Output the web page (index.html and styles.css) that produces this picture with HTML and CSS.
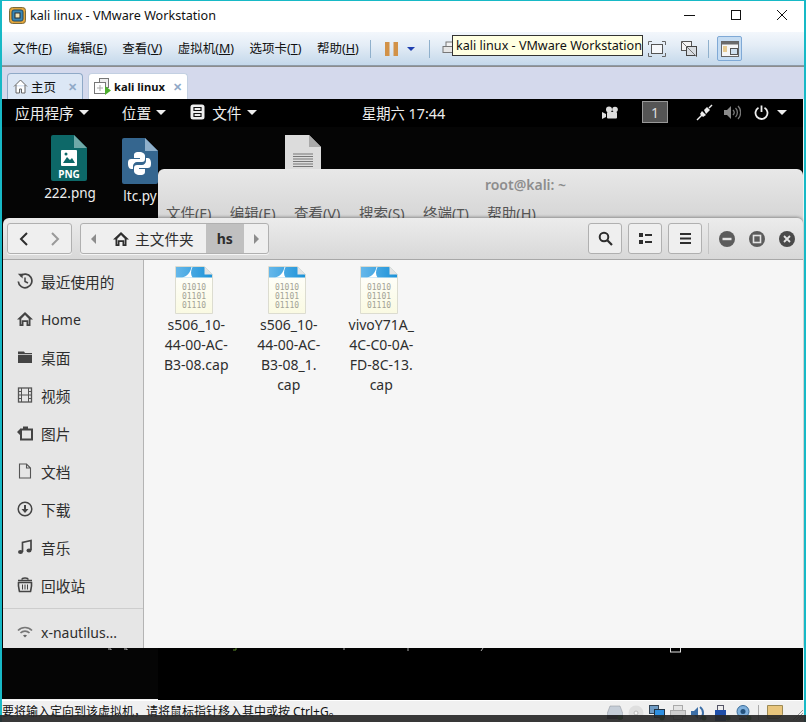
FILE: index.html
```html
<!DOCTYPE html>
<html lang="zh">
<head>
<meta charset="utf-8">
<title>kali linux - VMware Workstation</title>
<link rel="stylesheet" href="styles.css">
</head>
<body>
<div class="window">
  <div class="frame">
    <header class="titlebar">
      <svg class="app-logo" width="17" height="17" viewBox="0 0 17 17"><rect x="0.5" y="0.5" width="16" height="16" rx="3" fill="#e2a43a" stroke="#7d6a3a"/><rect x="3" y="3" width="11" height="11" rx="2" fill="#3a86b4" stroke="#1d4a68"/><rect x="6" y="6" width="5" height="5" fill="#f2e5b8" stroke="#2b2b2b"/></svg>
      <span class="title-text">kali linux - VMware Workstation</span>
      <div class="winctl">
        <svg width="12" height="12" viewBox="0 0 12 12"><path d="M0 6.5h11" stroke="#111" fill="none"/></svg>
        <svg width="12" height="12" viewBox="0 0 12 12"><rect x="1.5" y="1.5" width="9" height="9" stroke="#111" fill="none"/></svg>
        <svg width="12" height="12" viewBox="0 0 12 12"><path d="M1 1l10 10M11 1L1 11" stroke="#111" fill="none"/></svg>
      </div>
    </header>

    <nav class="toolbar">
      <div class="menus">
        <span>文件(<u>F</u>)</span><span>编辑(<u>E</u>)</span><span>查看(<u>V</u>)</span><span>虚拟机(<u>M</u>)</span><span>选项卡(<u>T</u>)</span><span>帮助(<u>H</u>)</span>
      </div>
      <i class="tb-sep tb-sep-a"></i>
      <svg class="tb-pause" width="13" height="14" viewBox="0 0 13 14"><rect width="4.5" height="14" fill="#d29248"/><rect x="8.5" width="4.5" height="14" fill="#d29248"/></svg>
      <svg class="tb-drop" width="8" height="4" viewBox="0 0 8 4"><path d="M0 0h8L4 4z" fill="#1f3fb0"/></svg>
      <i class="tb-sep tb-sep-b"></i>
      <svg class="tb-send" width="12" height="16" viewBox="0 0 12 16"><rect x="4" y="1" width="7" height="6" fill="#f2f2f2" stroke="#777"/><rect x="1" y="5.5" width="10" height="6" fill="#e6e6e6" stroke="#777"/></svg>
      <div class="tb-end">
        <svg width="18" height="16" viewBox="0 0 18 16"><rect x="3.5" y="3.5" width="11" height="9" fill="#f6f8fb" stroke="#555"/><path d="M0.5 4V0.5H4M14 .5h3.5V4M.5 12v3.5H4M14 15.500h3.500V12" fill="none" stroke="#666"/></svg>
        <svg width="18" height="18" viewBox="0 0 18 18"><rect x="1.500" y="1.500" width="10" height="9" fill="#f4f4f4" stroke="#555"/><rect x="6.500" y="6.500" width="10" height="9" fill="#d8dde2" stroke="#444"/><path d="M1 1l16 16" stroke="#777"/></svg>
        <i class="tb-sep tb-sep-c"></i>
        <span class="tb-active">
          <svg width="18" height="16" viewBox="0 0 18 16"><rect x="0.500" y="0.500" width="17" height="15" fill="#f6f6f6" stroke="#666"/><rect x="1" y="1" width="16" height="2.500" fill="#6b6b6b"/><path d="M2 6h4M2 8h4M2 10h4" stroke="#d9a02f"/><rect x="9.500" y="7.500" width="7" height="6" fill="#cfe0ef" stroke="#555"/></svg>
        </span>
      </div>
      <div class="tooltip">kali linux - VMware Workstation</div>
    </nav>

    <div class="tabbar">
      <div class="tab tab-home">
        <svg width="15" height="15" viewBox="0 0 15 15"><path d="M1 7.500L7.500 1 14 7.500M3 6v8h3.500v-4h2v4H12V6" fill="#fff" stroke="#666" stroke-width="1"/></svg>
        <span>主页</span><b class="tab-x">✕</b>
      </div>
      <div class="tab tab-vm">
        <svg width="17" height="17" viewBox="0 0 17 17"><rect x="5.500" y="0.500" width="9" height="9" fill="#eee" stroke="#777"/><rect x="0.500" y="4.500" width="11" height="11" fill="#fff" stroke="#777"/><path d="M6 7v6M3 10h6" stroke="#aaa"/><path d="M11 8l6 4.500-6 4.500z" fill="#4cae2c"/></svg>
        <strong>kali linux</strong><b class="tab-x">✕</b>
      </div>
    </div>

    <main class="vm">
      <div class="gnome-bar">
        <span class="gb-item gb-apps">应用程序<i class="caret"></i></span>
        <span class="gb-item gb-places">位置<i class="caret"></i></span>
        <span class="gb-item gb-files">
          <svg width="15" height="16" viewBox="0 0 15 16"><rect x="0.500" y="0.500" width="14" height="15" rx="2.500" fill="#eee"/><path d="M4 3.500h7v3H4zM4 9.500h7v3H4z" fill="none" stroke="#111" stroke-width="1.200"/></svg>
          文件<i class="caret"></i>
        </span>
        <span class="gb-clock">星期六 17:44</span>
        <div class="gb-tray">
          <svg class="tray-cam" width="16" height="13" viewBox="0 0 16 13"><circle cx="7" cy="3.500" r="3" fill="#ddd"/><circle cx="13" cy="3.500" r="2.800" fill="#ddd"/><rect x="5" y="6" width="10" height="6.500" rx="1" fill="#ddd"/><path d="M0 6l4 2v3l-4 2z" fill="#ddd"/></svg>
          <span class="ws-box">1</span>
          <svg class="tray-net" width="17" height="17" viewBox="0 0 17 17"><path d="M1 16l5-5" stroke="#eee" stroke-width="1.500"/><path d="M6 7l4 4-3 2-3-3z" fill="#eee"/><path d="M8 6l3-3 3 3-4 4z" fill="#eee"/><path d="M13 4l3-3" stroke="#eee" stroke-width="1.500"/></svg>
          <svg class="tray-vol" width="17" height="15" viewBox="0 0 17 15"><path d="M0 5h3l4-4v13l-4-4H0z" fill="#8a8a8a"/><path d="M9 5c1.500 1.500 1.500 3.500 0 5M11.500 3c2.500 2.500 2.500 6.500 0 9M14 1c3.500 3.500 3.500 9.500 0 13" stroke="#777" stroke-width="1.300" fill="none"/></svg>
          <svg class="tray-pow" width="15" height="15" viewBox="0 0 15 15"><path d="M4.500 2.800a6 6 0 1 0 6 0M7.500 0.500v6.500" stroke="#eee" stroke-width="1.800" fill="none"/></svg>
          <i class="caret"></i>
        </div>
      </div>

      <div class="desktop">
        <figure class="dicon dicon-png">
          <svg width="36" height="46" viewBox="0 0 36 46"><path d="M2 0h21l13 13v31a2 2 0 0 1-2 2H2a2 2 0 0 1-2-2V2a2 2 0 0 1 2-2z" fill="#0d6868"/><path d="M23 0l13 13H23z" fill="#6fa9a8"/><rect x="10" y="15" width="16" height="16" rx="1" fill="#fff"/><path d="M12 28l4-6 3 3 2-2 3 5z" fill="#0d6868"/><circle cx="15" cy="19" r="1.500" fill="#0d6868"/><text x="18" y="43" class="png-text">PNG</text></svg>
          <figcaption>222.png</figcaption>
        </figure>
        <figure class="dicon dicon-py">
          <svg width="36" height="46" viewBox="0 0 36 46"><path d="M2 0h21l13 13v31a2 2 0 0 1-2 2H2a2 2 0 0 1-2-2V2a2 2 0 0 1 2-2z" fill="#35668f"/><path d="M23 0l13 13H23z" fill="#8fb0cb"/><path d="M17 14c-5 0-5 2-5 4v2h6v1H9c-3 0-3 3-3 5s1 5 3 5h2v-3c0-2 2-4 4-4h5c2 0 3-1 3-3v-3c0-2-2-4-6-4z" fill="#fff"/><path d="M18 37c5 0 5-2 5-4v-2h-6v-1h9c3 0 3-3 3-5s-1-5-3-5h-2v3c0 2-2 4-4 4h-5c-2 0-3 1-3 3v3c0 2 2 4 6 4z" fill="#fff"/></svg>
          <figcaption>ltc.py</figcaption>
        </figure>
        <figure class="dicon dicon-doc">
          <svg width="36" height="46" viewBox="0 0 36 46"><path d="M0 0h24l12 12v34H0z" fill="#dcdcdc"/><path d="M24 0l12 12H24z" fill="#a9a9a9"/><path d="M8 19h20M8 21.500h20M8 24h20M8 26.500h20M8 29h20M8 31.500h20" stroke="#777"/></svg>
        </figure>

        <section class="terminal">
          <div class="term-title">root@kali: ~</div>
          <div class="term-menu">
            <span>文件(F)</span><span>编辑(E)</span><span>查看(V)</span><span>搜索(S)</span><span>终端(T)</span><span>帮助(H)</span>
          </div>
          <div class="term-body"></div>
          <svg class="term-residue" width="645" height="6" viewBox="0 0 645 6"><path d="M-50 1h3v1M-34 1h3v1" stroke="#bbb" fill="none"/><path d="M75 2h3v-2" stroke="#5a8a2a" fill="none"/><path d="M186 0v2M250 0v3M325 0l-2 3" stroke="#aaa" fill="none"/><rect x="512.500" y="-2" width="10" height="6" fill="none" stroke="#ddd"/></svg>
        </section>

        <section class="nautilus">
          <header class="naut-head">
            <div class="btn-group nav-group">
              <span class="hbtn nav-btn"><svg width="10" height="14" viewBox="0 0 10 14"><path d="M8 1L2 7l6 6" fill="none" stroke="#2e2e2e" stroke-width="2"/></svg></span>
              <span class="hbtn nav-btn"><svg width="10" height="14" viewBox="0 0 10 14"><path d="M2 1l6 6-6 6" fill="none" stroke="#999" stroke-width="2"/></svg></span>
            </div>
            <div class="btn-group path-group">
              <span class="path-arrow"><svg width="5" height="10" viewBox="0 0 5 10"><path d="M5 0v10L0 5z" fill="#8c8c8c"/></svg></span>
              <span class="path-home"><svg width="16" height="14" viewBox="0 0 16 14"><path d="M8 0L0 7.500h2.500V14h4v-4h3v4h4V7.500H16zM4.300 6.800L8 3l3.700 3.800v5.400h-.5V8.300H4.800v3.900h-.5z" fill="#2e2e2e" fill-rule="evenodd"/></svg>主文件夹</span>
              <span class="path-cur">hs</span>
              <span class="path-arrow"><svg width="5" height="10" viewBox="0 0 5 10"><path d="M0 0v10l5-5z" fill="#8c8c8c"/></svg></span>
            </div>
            <div class="head-right">
              <span class="hbtn tool"><svg width="15" height="15" viewBox="0 0 15 15"><circle cx="6" cy="6" r="4.300" fill="none" stroke="#2e2e2e" stroke-width="2"/><path d="M9.300 9.300L14 14" stroke="#2e2e2e" stroke-width="2.200"/></svg></span>
              <span class="hbtn tool"><svg width="13" height="11" viewBox="0 0 13 11"><rect width="4" height="4" fill="#2e2e2e"/><rect y="7" width="4" height="4" fill="#2e2e2e"/><rect x="6" y="1" width="7" height="2" fill="#2e2e2e"/><rect x="6" y="8" width="7" height="2" fill="#2e2e2e"/></svg></span>
              <span class="hbtn tool"><svg width="11" height="11" viewBox="0 0 11 11"><path d="M0 1h11M0 5.500h11M0 10h11" stroke="#2e2e2e" stroke-width="1.800"/></svg></span>
              <i class="head-sep"></i>
              <span class="wm-btn"><svg width="16" height="16" viewBox="0 0 16 16"><circle cx="8" cy="8" r="8" fill="#5c5c5c"/><rect x="3.500" y="6.800" width="9" height="2.400" fill="#e4e4e4"/></svg></span>
              <span class="wm-btn"><svg width="16" height="16" viewBox="0 0 16 16"><circle cx="8" cy="8" r="8" fill="#5c5c5c"/><rect x="4.500" y="4.500" width="7" height="7" fill="none" stroke="#e4e4e4" stroke-width="1.600"/></svg></span>
              <span class="wm-btn"><svg width="16" height="16" viewBox="0 0 16 16"><circle cx="8" cy="8" r="8" fill="#4a4a4a"/><path d="M5 5l6 6M11 5l-6 6" stroke="#e4e4e4" stroke-width="1.800"/></svg></span>
            </div>
          </header>
          <div class="naut-body">
            <aside class="sidebar">
              <a class="side-row"><svg viewBox="0 0 16 16"><path d="M3.200 3.200A6.800 6.800 0 1 1 1.300 8.500" fill="none" stroke="#444" stroke-width="1.700"/><path d="M.8 .8h4.800v4.800z" fill="#444"/><path d="M8 4.500V8.500l3 1.500" fill="none" stroke="#444" stroke-width="1.500"/></svg><span class="zh">最近使用的</span></a>
              <a class="side-row"><svg viewBox="0 0 16 16"><path d="M8 1L0 8.500h2.500V15h4v-4h3v4h4V8.500H16zM4.300 7.800L8 4l3.700 3.800v5.400h-.5V9.300H4.800v3.900h-.5z" fill="#444" fill-rule="evenodd"/></svg><span>Home</span></a>
              <a class="side-row"><svg viewBox="0 0 16 16"><path d="M1 2.500h6l1 1.500h7v1.200H1z" fill="#444"/><rect x="1" y="6" width="14" height="8" fill="#444"/></svg><span class="zh">桌面</span></a>
              <a class="side-row"><svg viewBox="0 0 16 16"><rect x="1.500" y="1" width="13" height="14" fill="none" stroke="#555" stroke-width="1.300"/><path d="M4.500 1v14M11.500 1v14M4.500 8h7M1.500 4.500h3M1.500 8h3M1.500 11.500h3M11.500 4.500h3M11.500 8h3M11.500 11.500h3" stroke="#555" fill="none"/></svg><span class="zh">视频</span></a>
              <a class="side-row"><svg viewBox="0 0 16 16"><rect x="4" y="4.500" width="11" height="10" fill="none" stroke="#444" stroke-width="2"/><path d="M6 1.500h5v3H6zM0 7l3-3v6z" fill="#444"/></svg><span class="zh">图片</span></a>
              <a class="side-row"><svg viewBox="0 0 16 16"><path d="M2.500 1h7l4 4v10h-11zM9.500 1v4h4" fill="none" stroke="#555" stroke-width="1.100"/></svg><span class="zh">文档</span></a>
              <a class="side-row"><svg viewBox="0 0 16 16"><circle cx="8" cy="8" r="6.800" fill="none" stroke="#444" stroke-width="1.500"/><path d="M7 4h2v4h2.500L8 12 4.500 8H7z" fill="#444"/></svg><span class="zh">下载</span></a>
              <a class="side-row"><svg viewBox="0 0 16 16"><path d="M5.500 13V3.500L14 1.500V11" fill="none" stroke="#444" stroke-width="1.700"/><ellipse cx="3.500" cy="13" rx="2.500" ry="2" fill="#444"/><ellipse cx="12" cy="11.500" rx="2.500" ry="2" fill="#444"/></svg><span class="zh">音乐</span></a>
              <a class="side-row"><svg viewBox="0 0 16 16"><path d="M1 3.500h14M5 2.500c0-2 6-2 6 0" fill="none" stroke="#444" stroke-width="1.500"/><path d="M1.500 5.500h13c.5 4-.5 7-1 9h-11c-.5-2-1.500-5-1-9z" fill="none" stroke="#444" stroke-width="1.600"/><path d="M5.500 7.500v5M8 7.500v5M10.500 7.500v5" stroke="#444"/></svg><span class="zh">回收站</span></a>
              <hr class="side-rule">
              <a class="side-row side-net"><svg viewBox="0 0 16 16"><path d="M1 6.500c4-4 10-4 14 0M3.500 9c2.500-2.500 6.500-2.500 9 0" fill="none" stroke="#777" stroke-width="1.700"/><path d="M6 11.500c1-1 3-1 4 0L8 13.500z" fill="#666"/></svg><span>x-nautilus...</span></a>
            </aside>
            <div class="files">
              <div class="file">
                <svg class="ficon" width="38" height="48" viewBox="0 0 38 48"><use href="#capfile"/></svg>
                <span>s506_10-<br>44-00-AC-<br>B3-08.cap</span>
              </div>
              <div class="file">
                <svg class="ficon" width="38" height="48" viewBox="0 0 38 48"><use href="#capfile"/></svg>
                <span>s506_10-<br>44-00-AC-<br>B3-08_1.<br>cap</span>
              </div>
              <div class="file">
                <svg class="ficon" width="38" height="48" viewBox="0 0 38 48"><use href="#capfile"/></svg>
                <span>vivoY71A_<br>4C-C0-0A-<br>FD-8C-13.<br>cap</span>
              </div>
            </div>
          </div>
        </section>
      </div>
    </main>

    <footer class="statusbar">
      <span class="status-text">要将输入定向到该虚拟机，请将鼠标指针移入其中或按 Ctrl+G。</span>
      <div class="status-icons">
        <svg width="16" height="15" viewBox="0 0 16 15"><path d="M3 1h10l3 8v4H0V9z" fill="#c6ced8" stroke="#8a8f96" stroke-width=".5"/><rect y="10" width="16" height="4" fill="#333c4c"/><circle cx="13" cy="12.500" r="2.500" fill="#2f7d2f"/></svg>
        <svg width="16" height="16" viewBox="0 0 16 16"><circle cx="8" cy="8" r="7.500" fill="#dfdfdf"/><circle cx="8" cy="8" r="2" fill="#f4f4f4" stroke="#bbb"/></svg>
        <svg width="16" height="16" viewBox="0 0 16 16"><rect x="0.500" y="0.500" width="9" height="8" fill="#6f9bc4" stroke="#345"/><rect x="5.500" y="4.500" width="10" height="8" fill="#2e8fe0" stroke="#234"/><circle cx="13" cy="13" r="2.500" fill="#2f7d2f"/></svg>
        <svg width="16" height="15" viewBox="0 0 16 15"><rect x="3.500" y="0.500" width="9" height="5" fill="#e4e4e4" stroke="#aaa"/><rect x="0.500" y="5.500" width="15" height="6" fill="#cfcfcf" stroke="#aaa"/><rect x="3.500" y="10.500" width="9" height="4" fill="#eee" stroke="#aaa"/></svg>
        <svg width="16" height="16" viewBox="0 0 16 16"><path d="M0 6h3l4-4v12l-4-4H0z" fill="#3c6ea6"/><path d="M9 2c4 3 4 9 0 12" stroke="#3c6ea6" stroke-width="2" fill="none"/><circle cx="13" cy="13" r="2.500" fill="#2f7d2f"/></svg>
        <svg class="st-usb" width="16" height="16" viewBox="0 0 16 16"><rect x="2.500" y="0.500" width="6" height="5" fill="#eee" stroke="#556"/><rect x="0" y="5" width="11" height="11" fill="#1f4fa8"/><circle cx="13" cy="13" r="2.500" fill="#2f7d2f"/></svg>
        <svg width="16" height="16" viewBox="0 0 16 16"><circle cx="7" cy="6.500" r="6" fill="#7fb0dc" stroke="#3b6d99"/><circle cx="7" cy="6.500" r="2.500" fill="#24527c"/><rect x="3" y="13" width="8" height="2" fill="#555"/><circle cx="13" cy="13" r="2.500" fill="#2f7d2f"/></svg>
        <i class="st-sep"></i>
        <svg width="16" height="14" viewBox="0 0 16 14"><path d="M.500 .500h15v9l-4 4h-11z" fill="#e9c67d" stroke="#9d8a55"/></svg>
      </div>
      <svg class="grip" width="10" height="10" viewBox="0 0 10 10"><path d="M10 0L0 10M10 3L3 10M10 6L6 10" stroke="#999"/></svg>
    </footer>
  </div>
  <div class="taskbar"></div>
</div>

<svg class="defs" width="0" height="0">
  <defs>
    <linearGradient id="paper" x1="0" y1="0" x2="0" y2="1"><stop offset="0" stop-color="#ffffff"/><stop offset="1" stop-color="#fafae2"/></linearGradient>
    <linearGradient id="sky" x1="0" y1="0" x2="1" y2="0"><stop offset="0" stop-color="#66b8ea"/><stop offset="1" stop-color="#1c92d8"/></linearGradient>
  </defs>
  <symbol id="capfile" viewBox="0 0 38 48">
    <path d="M.5 .5h29l8 8v39H.5z" fill="url(#paper)" stroke="#dcdcd0"/>
    <path d="M1 1h28.500l7.500 7.500V11.500H1z" fill="url(#sky)"/>
    <path d="M7 11.500c5-1 8.500-5 9.500-10.500h1c-2 4-2 7.500 0 10.500z" fill="#fff"/>
    <path d="M29.500 .5l8 8h-8z" fill="#e4e4e4"/>
    <text x="19" y="24" class="bits">01010</text>
    <text x="19" y="33" class="bits">01101</text>
    <text x="19" y="42" class="bits">01110</text>
  </symbol>
</svg>
</body>
</html>
```

FILE: styles.css
```css
* { box-sizing: border-box; }
html, body { margin: 0; padding: 0; }
body {
  width: 806px;
  height: 722px;
  overflow: hidden;
  font-family: "Noto Sans", "Noto Sans CJK SC", sans-serif;
}
u { text-underline-offset: 1px; }
figure { margin: 0; }
.defs { position: absolute; }

.window { position: relative; width: 806px; height: 722px; display: flex; flex-direction: column; overflow: hidden; }
.frame {
  flex: 1;
  min-height: 0;
  display: flex;
  flex-direction: column;
  overflow: hidden;
  background: #f0f0f0;
  border-top: 1px solid #17b9c6;
  border-left: 2px solid #17b9c6;
  border-right: 2px solid #17b9c6;
}
.taskbar { position: absolute; left: 0; right: 0; bottom: 0; height: 7px; background: rgba(40, 40, 40, .92); }

/* title bar */
.titlebar {
  height: 31px;
  flex: none;
  display: flex;
  align-items: center;
  padding: 0 0 3px 7px;
  background: #fff;
}
.app-logo { margin-right: 4px; }
.title-text { font-size: 12.600px; color: #111; }
.winctl { margin-left: auto; display: flex; gap: 34px; padding-right: 16px; }

/* toolbar */
.toolbar {
  position: relative;
  height: 34px;
  flex: none;
  display: flex;
  align-items: center;
  background: linear-gradient(#f3f7fc, #e4edf6 40%, #c4d8eb);
  border-bottom: 1px solid #8e9aa6;
}
.menus { display: flex; gap: 15.400px; padding: 0 0 2px 11px; font-size: 12.500px; color: #111; width: 366px; }
.tb-sep { display: block; width: 1px; height: 18px; background: #8fb0cc; flex: none; }
.tb-sep-a { margin-left: 2px; }
.tb-pause { margin-left: 14px; }
.tb-drop { margin-left: 9px; }
.tb-sep-b { margin-left: 14px; }
.tb-send { margin-left: 12px; }
.tb-end { margin-left: auto; display: flex; align-items: center; gap: 14px; padding-right: 62px; }
.tb-sep-c { margin-left: -4px; margin-right: -6px; }
.tb-active {
  width: 25px;
  height: 25px;
  display: flex;
  align-items: center;
  justify-content: center;
  border: 1px solid #7fa9d6;
  border-radius: 2px;
  background: #c5dcf2;
}
.tooltip {
  position: absolute;
  left: 450px;
  top: 3px;
  width: 191px;
  height: 21px;
  line-height: 19px;
  padding-left: 3px;
  font-size: 12.600px;
  color: #111;
  white-space: nowrap;
  background: #ffffe1;
  border: 1px solid #333;
}

/* tabs */
.tabbar {
  height: 33px;
  flex: none;
  display: flex;
  align-items: flex-end;
  gap: 5px;
  padding-left: 5px;
  background: #d4d9ec;
  border-top: 1px solid #8d8d8d;
}
.tab {
  height: 26px;
  display: flex;
  align-items: center;
  padding-left: 5px;
  border: 1px solid #8fa9c7;
  border-bottom: 0;
  border-radius: 4px 4px 0 0;
  font-size: 12.500px;
  color: #111;
}
.tab-home { width: 76px; background: #dce7f5; gap: 3px; }
.tab-vm { width: 100px; background: #fff; gap: 3px; border-color: #c3d0e2; }
.tab-vm strong { font-size: 11.200px; font-weight: 700; white-space: nowrap; }
.tab-x { margin-left: auto; margin-right: 5px; font-size: 11px; color: #8fa9c7; font-weight: 700; }

/* vm */
.vm { flex: 1; min-height: 0; display: flex; flex-direction: column; margin: 0 1px 1px 0; background: #000; }
.gnome-bar {
  height: 28px;
  flex: none;
  display: flex;
  align-items: center;
  position: relative;
  padding: 0 0 2px 13px;
  font-size: 14.700px;
  color: #eee;
  background: #000;
}
.gb-item { display: flex; align-items: center; white-space: nowrap; }
.gb-apps { margin-right: 33px; }
.gb-places { margin-right: 24px; }
.gb-files svg { margin-right: 7px; }
.caret {
  display: inline-block;
  width: 0;
  height: 0;
  margin-left: 5px;
  border-left: 5px solid transparent;
  border-right: 5px solid transparent;
  border-top: 5px solid #eee;
}
.gb-clock { position: absolute; left: 360px; font-size: 14.300px; white-space: nowrap; }
.gb-tray { margin-left: auto; display: flex; align-items: center; padding-right: 16px; }
.tray-cam { margin-right: 24px; }
.ws-box {
  width: 26px;
  height: 22px;
  display: flex;
  align-items: center;
  justify-content: center;
  margin-right: 28px;
  background: #555;
  border: 1px solid #999;
  color: #ddd;
  font-size: 14px;
}
.tray-net { margin-right: 11px; }
.tray-vol { margin-right: 13px; }
.tray-pow { margin-right: 3px; }

.desktop { flex: 1; min-height: 0; position: relative; background: #050505; }
.dicon { position: absolute; width: 80px; display: flex; flex-direction: column; align-items: center; color: #eee; font-size: 13.500px; }
.dicon figcaption { line-height: 20px; margin-top: 2px; }
.dicon-png figcaption { padding-left: 2px; }
.dicon-png { left: 27px; top: 8px; }
.dicon-py { left: 98px; top: 11px; }
.dicon-doc { left: 261px; top: 8px; }
.png-text { font: 700 10px "Noto Sans", sans-serif; fill: #fff; text-anchor: middle; }

.terminal {
  position: absolute;
  left: 156px;
  top: 42px;
  width: 645px;
  height: 532px;
  display: flex;
  flex-direction: column;
  border-radius: 6px 6px 0 0;
  background: #000;
}
.term-title {
  height: 32px;
  line-height: 32px;
  text-align: center;
  padding-left: 90px;
  font-size: 14px;
  font-weight: 600;
  color: #8d8d8d;
  background: linear-gradient(#e8e8e8, #dcdcdc);
  border-radius: 6px 6px 0 0;
}
.term-menu {
  height: 28px;
  display: flex;
  gap: 18.500px;
  padding-left: 8px;
  font-size: 14.500px;
  line-height: 24px;
  color: #555;
  background: linear-gradient(#dcdcdc, #d2d2d2);
}
.term-body { flex: 1; }
.term-residue { position: absolute; left: 0; top: 479px; overflow: visible; }

/* nautilus */
.nautilus {
  position: absolute;
  left: 1px;
  top: 91px;
  width: 800px;
  height: 430px;
  display: flex;
  flex-direction: column;
  border-radius: 6px 6px 0 0;
  box-shadow: 0 -1px 3px rgba(0,0,0,.35);
  overflow: hidden;
}
.naut-head {
  height: 42px;
  flex: none;
  display: flex;
  align-items: center;
  padding-left: 4px;
  background: linear-gradient(#ececec, #d8d8d8);
  border-bottom: 1px solid #a8a8a8;
}
.btn-group {
  height: 31px;
  display: flex;
  align-items: stretch;
  background: #efefef;
  border: 1px solid #b0b0b0;
  border-radius: 3px;
  box-shadow: 0 1px 0 #f4f4f4;
  overflow: hidden;
}
.nav-group { width: 65px; margin-right: 8px; }
.nav-btn { flex: 1; display: flex; align-items: center; justify-content: center; }
.path-group { width: 189px; font-size: 14px; color: #2e2e2e; }
.path-arrow { width: 24px; flex: none; display: flex; align-items: center; justify-content: center; }
.path-home { width: 102px; display: flex; align-items: center; padding-left: 8px; gap: 6px; font-size: 14.700px; white-space: nowrap; }
.path-cur { width: 39px; display: flex; align-items: center; justify-content: center; font-weight: 700; background: #c0c0c0; }
.head-right { margin-left: auto; display: flex; align-items: center; padding-right: 8px; }
.tool {
  width: 34px;
  height: 31px;
  margin-right: 6px;
  display: flex;
  align-items: center;
  justify-content: center;
  background: #efefef;
  border: 1px solid #b0b0b0;
  border-radius: 3px;
}
.head-sep { width: 1px; height: 31px; background: #c4c4c4; margin-right: 10px; }
.wm-btn { width: 16px; height: 16px; margin-right: 14px; display: block; }
.wm-btn:last-child { margin-right: 0; }
.wm-btn svg { display: block; }

.naut-body { flex: 1; min-height: 0; display: flex; }
.sidebar {
  width: 141px;
  flex: none;
  background: #e6e6e6;
  border-right: 1px solid #b4b4b4;
  padding-top: 2px;
  font-size: 14px;
  color: #2e2e2e;
}
.side-row { height: 38px; display: flex; align-items: center; padding-left: 14px; gap: 8px; white-space: nowrap; }
.side-row svg { width: 16px; height: 16px; flex: none; }
.zh { font-size: 14.700px; }
.side-rule { margin: 4px 0 4px; border: 0; border-top: 1px solid #cdcdcd; }
.files { flex: 1; display: flex; align-items: flex-start; padding: 6px 0 0 6px; background: #f6f6f6; }
.file {
  width: 92.500px;
  display: flex;
  flex-direction: column;
  align-items: center;
  text-align: center;
  font-size: 14px;
  line-height: 20px;
  color: #2e2e2e;
}
.file span { margin-top: 1px; }
.ficon { display: block; margin-right: 4px; }
.bits { font: 8px "DejaVu Sans Mono", monospace; fill: #a3a396; text-anchor: middle; }

/* status bar */
.statusbar {
  height: 22px;
  flex: none;
  display: flex;
  align-items: flex-start;
  position: relative;
  margin-left: -2px;
  padding-left: 2px;
  background: #f0f0f0;
  border-top: 1px solid #fff;
}
.status-text { font-size: 12px; line-height: 18px; color: #111; white-space: nowrap; margin-top: 2px; }
.status-icons { margin-left: auto; margin-top: 4px; display: flex; align-items: flex-start; gap: 5px; padding-right: 21px; }
.st-usb { margin-left: 3px; }
.st-sep { width: 1px; height: 15px; background: #aaa; margin: 0 3px 0 1px; }
.grip { position: absolute; right: 1px; bottom: 2px; }
```
